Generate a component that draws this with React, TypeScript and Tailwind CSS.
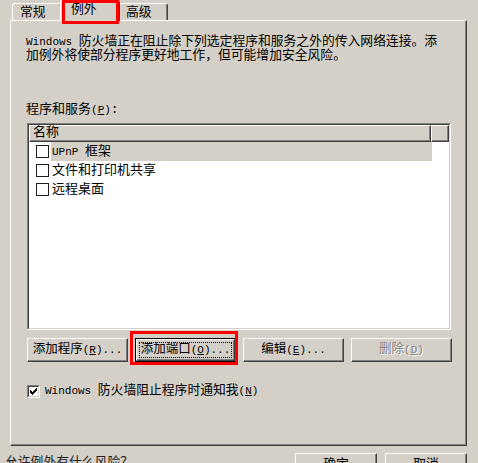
import React from "react";

// Latin runs use a narrower mono size, like the bitmap system font
const L: React.FC<{ children: React.ReactNode }> = ({ children }) => (
  <span className="text-[11px]">{children}</span>
);

const Key: React.FC<{ k: string }> = ({ k }) => (
  <span className="text-[11px]">
    (<span className="underline">{k}</span>)
  </span>
);

const Tab: React.FC<{ label: string; active?: boolean }> = ({ label, active }) => (
  <div
    className={
      active
        ? "relative z-10 -mx-[2px] -mb-px h-[21px] w-[60px] pl-[10px] pt-[2px] leading-[14px] bg-[#d4d0c8] border-l border-t border-r border-white border-r-[#404040] shadow-[inset_-1px_0_0_#808080] rounded-t-[3px]"
        : "h-[17px] w-[50px] pl-[7px] pt-[2px] leading-[14px] border-l border-t border-r border-white border-r-[#404040] shadow-[inset_-1px_0_0_#808080] rounded-t-[3px]"
    }
  >
    {label}
  </div>
);

const Btn: React.FC<{
  children: React.ReactNode;
  isDefault?: boolean;
  disabled?: boolean;
}> = ({ children, isDefault, disabled }) => (
  <div className={isDefault ? "w-[101px] h-[24px] border border-black" : "w-[101px] h-[24px]"}>
    <div className="h-full border border-t-white border-l-white border-r-[#404040] border-b-[#404040] shadow-[inset_-1px_-1px_0_#808080] flex items-center justify-center p-[2px] text-[12.5px]">
      {isDefault ? (
        <div className="w-full h-full border border-dotted border-black flex items-center justify-center leading-[14px]">
          {children}
        </div>
      ) : (
        <span
          className={
            disabled
              ? "leading-[14px] text-[#808080] [text-shadow:1px_1px_0_#ffffff]"
              : "leading-[14px]"
          }
        >
          {children}
        </span>
      )}
    </div>
  </div>
);

const ListRow: React.FC<{ label: React.ReactNode; selected?: boolean }> = ({ label, selected }) => (
  <div className="flex items-center h-[19px] pl-[7px]">
    <span className="w-[13px] h-[13px] border border-[#202020] bg-white shrink-0" />
    <div
      className={
        selected
          ? "ml-[2px] w-[381px] h-full flex items-center pl-[1px] bg-[#d4d0c8] text-[13px] whitespace-pre"
          : "ml-[2px] w-[381px] h-full flex items-center pl-[1px] text-[13px] whitespace-pre"
      }
    >
      <span>{label}</span>
    </div>
  </div>
);

const CheckMark = () => (
  <svg width="7" height="7" viewBox="0 0 7 7" shapeRendering="crispEdges">
    <rect x="0" y="2" width="1" height="3" fill="#000" />
    <rect x="1" y="3" width="1" height="3" fill="#000" />
    <rect x="2" y="4" width="1" height="3" fill="#000" />
    <rect x="3" y="3" width="1" height="3" fill="#000" />
    <rect x="4" y="2" width="1" height="3" fill="#000" />
    <rect x="5" y="1" width="1" height="3" fill="#000" />
    <rect x="6" y="0" width="1" height="3" fill="#000" />
  </svg>
);

const App: React.FC = () => {
  return (
    <div className="relative w-[478px] h-[463px] overflow-hidden bg-[#d4d0c8] text-black text-[12.8px] font-['Liberation_Mono','Noto_Sans_CJK_SC',monospace]">
      {/* tab strip */}
      <div className="flex items-end h-[20px] pl-[12px]">
        <Tab label="常规" />
        <Tab label="例外" active />
        <Tab label="高级" />
      </div>

      {/* tab page */}
      <div className="ml-[10px] w-[457px] h-[426px] border-l border-t border-r border-b border-white border-r-[#404040] border-b-[#404040] shadow-[inset_-1px_-1px_0_#808080] pl-[15px] pt-[14px]">
        <p className="leading-[13px] whitespace-nowrap">
          <L>Windows </L>防火墙正在阻止除下列选定程序和服务之外的传入网络连接。添
          <br />
          加例外将使部分程序更好地工作，但可能增加安全风险。
        </p>

        <div className="mt-[41px] leading-[13px] text-[13px]">
          程序和服务<Key k="P" />:
        </div>

        {/* list view */}
        <div className="ml-[1px] mt-[6px] w-[424px] h-[207px] border border-t-[#808080] border-l-[#808080] border-r-white border-b-white">
          <div className="h-full border border-t-[#404040] border-l-[#404040] border-r-[#d4d0c8] border-b-[#d4d0c8] bg-white flex flex-col">
            <div className="flex h-[17px] shrink-0 bg-[#d4d0c8] text-[13px]">
              <div className="w-[402px] border-l border-t border-r border-b border-white border-r-[#404040] border-b-[#404040] shadow-[inset_-1px_-1px_0_#808080] pl-[3px] leading-[14px]">
                名称
              </div>
              <div className="flex-1 border-l border-t border-r border-b border-white border-r-[#404040] border-b-[#404040] shadow-[inset_-1px_-1px_0_#808080]" />
            </div>
            <ListRow
              selected
              label={
                <>
                  <L>UPnP </L>框架
                </>
              }
            />
            <ListRow label="文件和打印机共享" />
            <ListRow label="远程桌面" />
          </div>
        </div>

        {/* buttons */}
        <div className="ml-[1px] mt-[8px] flex gap-[7px]">
          <Btn>
            添加程序<Key k="R" />
            <L>...</L>
          </Btn>
          <Btn isDefault>
            添加端口<Key k="O" />
            <L>...</L>
          </Btn>
          <Btn>
            编辑<Key k="E" />
            <L>...</L>
          </Btn>
          <Btn disabled>
            删除<Key k="D" />
          </Btn>
        </div>

        {/* notify checkbox */}
        <div className="ml-[1px] mt-[22px] flex items-center">
          <div className="w-[13px] h-[13px] border border-t-[#808080] border-l-[#808080] border-r-white border-b-white">
            <div className="w-full h-full border border-t-[#404040] border-l-[#404040] border-r-[#d4d0c8] border-b-[#d4d0c8] bg-white flex items-center justify-center">
              <CheckMark />
            </div>
          </div>
          <span className="ml-[5px] leading-[14px] whitespace-nowrap">
            <L>Windows </L>防火墙阻止程序时通知我<Key k="N" />
          </span>
        </div>
      </div>

      {/* dialog bottom, cut off */}
      <div className="flex mt-[7px] pl-[5px]">
        <span className="mt-[3px] leading-[14px] text-[#202020] whitespace-nowrap">允许例外有什么风险？</span>
        <div className="ml-auto mr-[11px] flex gap-[8px]">
          <div className="w-[82px] h-[23px] border border-t-white border-l-white border-r-[#404040] border-b-[#404040] shadow-[inset_-1px_-1px_0_#808080] flex justify-center pt-[4px] leading-[14px]">
            确定
          </div>
          <div className="w-[82px] h-[23px] border border-t-white border-l-white border-r-[#404040] border-b-[#404040] shadow-[inset_-1px_-1px_0_#808080] flex justify-center pt-[4px] leading-[14px]">
            取消
          </div>
        </div>
      </div>

      {/* red annotation boxes */}
      <div className="absolute left-[62px] top-0 w-[57px] h-[24px] border-[3px] border-[#ff0000] z-20" />
      <div className="absolute left-[130px] top-[331px] w-[108px] h-[34px] border-[3px] border-[#ff0000] z-20" />
    </div>
  );
};

export default App;
